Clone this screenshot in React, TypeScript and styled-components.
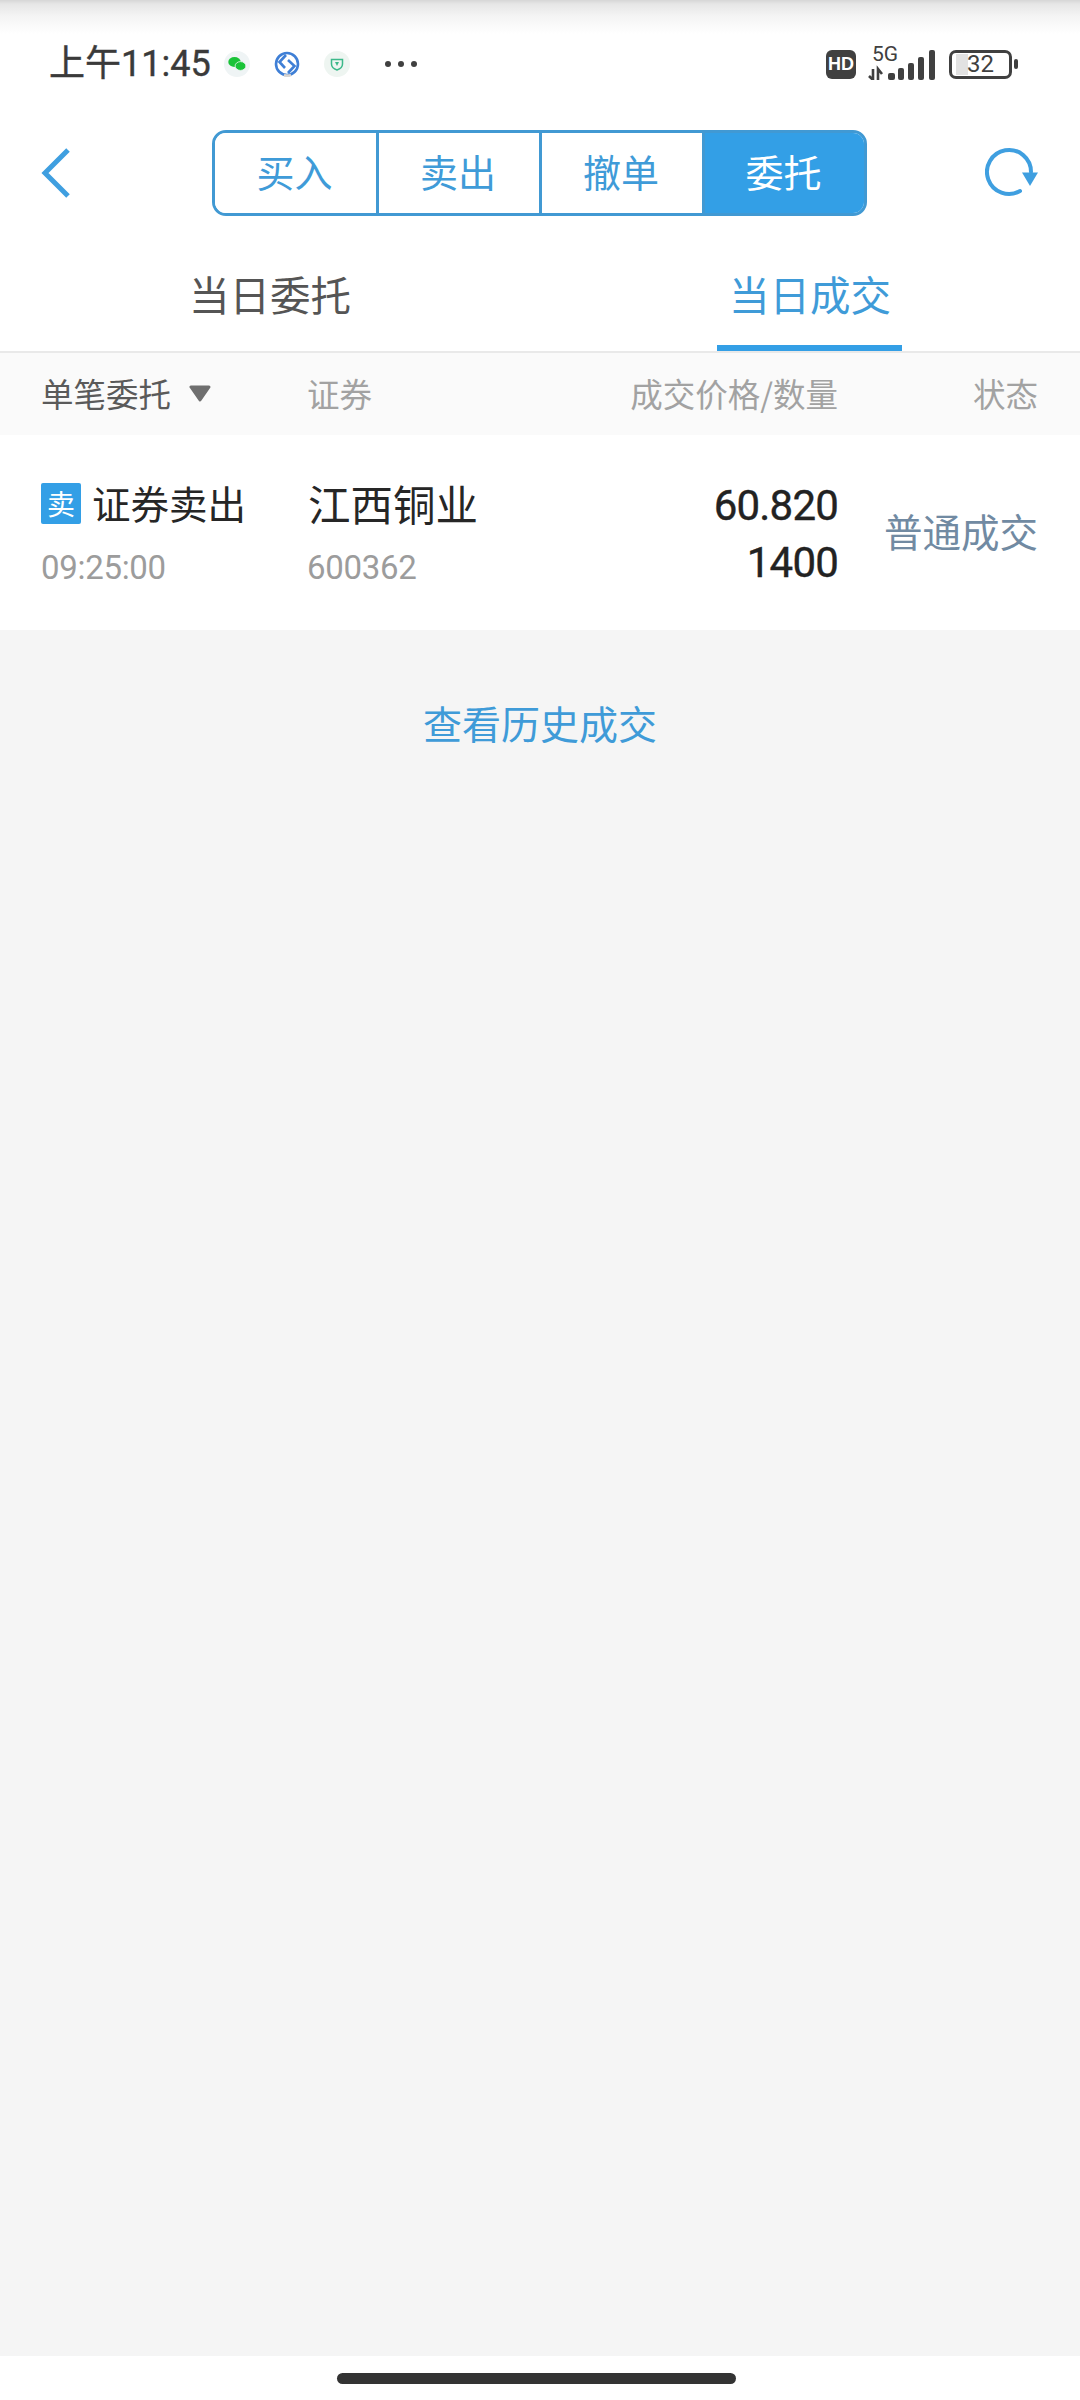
import React from "react";
import styled, { createGlobalStyle } from "styled-components";

const CJK = `"Noto Sans CJK SC", "Noto Sans", sans-serif`;
const DIGITS = `Roboto, "Noto Sans CJK SC", sans-serif`;
const BLUE = "#339fe6";

const GlobalStyle = createGlobalStyle`
    html, body {
        margin: 0;
        padding: 0;
        background: #fff;
    }
    * {
        box-sizing: border-box;
    }
`;

const Page = styled.div`
    width: 1080px;
    height: 2400px;
    display: flex;
    flex-direction: column;
    background: #fff;
    font-family: ${CJK};
    overflow: hidden;
`;

const StatusBar = styled.div`
    height: 130px;
    padding: 43px 62px 0 49px;
    display: flex;
    align-items: flex-start;
    justify-content: space-between;
    background: linear-gradient(#d6d6d6 0, #e6e6e6 4px, #f4f4f4 16px, #fff 34px);
`;

const StatusGroup = styled.div`
    display: flex;
    align-items: center;
    height: 42px;
`;

const Clock = styled.span`
    width: 161px;
    flex: none;
    white-space: nowrap;
    font-family: ${DIGITS};
    font-size: 36px;
    line-height: 42px;
    color: #3a3a3a;
    -webkit-text-stroke: 0.4px #3a3a3a;
`;

const NotifyIcon = styled.svg`
    width: 26px;
    height: 26px;
    margin-left: 24px;
    flex: none;
    &:first-of-type {
        margin-left: 14px;
    }
`;

const MoreDots = styled.svg`
    width: 34px;
    height: 8px;
    margin-left: 34px;
`;

const HdBadge = styled.span`
    width: 30px;
    height: 29px;
    border-radius: 6px;
    background: #404040;
    color: #fff;
    font: 900 18px/29px "Liberation Sans", sans-serif;
    text-align: center;
`;

const SignalBox = styled.div`
    position: relative;
    width: 68px;
    height: 32px;
    margin-left: 12px;
`;

const FiveG = styled.span`
    position: absolute;
    left: 4px;
    top: -4px;
    font: 400 21px/20px ${DIGITS};
    color: #404040;
`;

const Battery = styled.div`
    width: 63px;
    height: 29px;
    margin-left: 13px;
    padding: 1px 4px;
    border: 3px solid #404040;
    border-radius: 7px;
    background: linear-gradient(90deg, #e2e2e2 0 12px, transparent 12px) no-repeat content-box;
    color: #404040;
    font: 400 24px/21px ${DIGITS};
    text-align: center;
`;

const BatteryCap = styled.span`
    width: 4px;
    height: 10px;
    margin-left: 2px;
    border-radius: 2px;
    background: #404040;
`;

const NavBar = styled.div`
    height: 85px;
    display: grid;
    grid-template-columns: 212px 655px 1fr;
    align-items: center;
`;

const BackButton = styled.svg`
    width: 32px;
    height: 52px;
    margin-left: 40px;
`;

const RefreshButton = styled.svg`
    width: 56px;
    height: 56px;
    margin-left: 118px;
`;

const Segment = styled.div`
    height: 86px;
    display: grid;
    grid-template-columns: 161px 163px 163px 1fr;
    border: 3px solid #4199d3;
    border-radius: 14px;
    overflow: hidden;
`;

const SegmentItem = styled.div<{ $active?: boolean }>`
    display: flex;
    align-items: center;
    justify-content: center;
    padding: 0 2px 5px 0;
    font-size: 38px;
    color: ${(p) => (p.$active ? "#fff" : "#3f9bd8")};
    background: ${(p) => (p.$active ? BLUE : "#fff")};
    & + & {
        border-left: 3px solid #4199d3;
    }
`;

const Tabs = styled.div`
    height: 138px;
    padding-top: 51px;
    display: grid;
    grid-template-columns: 1fr 1fr;
    border-bottom: 2px solid #e9e9e9;
`;

const Tab = styled.div<{ $active?: boolean }>`
    position: relative;
    display: flex;
    justify-content: center;
    font-size: 40.5px;
    line-height: 56px;
    color: ${(p) => (p.$active ? "#3f9bd8" : "#555")};
    &::after {
        content: "";
        display: ${(p) => (p.$active ? "block" : "none")};
        position: absolute;
        left: 177px;
        width: 185px;
        bottom: 0;
        height: 6px;
        background: ${BLUE};
    }
`;

const TableRow = styled.div`
    display: grid;
    grid-template-columns: 266px 1fr 1fr 200px;
    padding: 0 42px 0 41px;
`;

const HeaderRow = styled(TableRow)`
    height: 82px;
    padding-bottom: 2px;
    align-items: center;
    background: #fafafa;
`;

const HeaderCell = styled.div<{ $right?: boolean; $dark?: boolean }>`
    display: flex;
    align-items: center;
    justify-content: ${(p) => (p.$right ? "flex-end" : "flex-start")};
    font-size: 32.5px;
    line-height: 44px;
    color: ${(p) => (p.$dark ? "#5a5a5a" : "#a2a2a2")};
`;

const SortArrow = styled.svg`
    width: 24px;
    height: 17px;
    margin-left: 17px;
`;

const TradeRow = styled(TableRow)`
    height: 195px;
    align-items: center;
    background: #fff;
`;

const Stack = styled.div`
    display: flex;
    flex-direction: column;
`;

const TradeTitle = styled.div`
    display: flex;
    align-items: center;
    height: 44px;
    margin-top: 2px;
    font-size: 38.5px;
    line-height: 44px;
    color: #262626;
`;

const SideBadge = styled.span`
    width: 40px;
    height: 41px;
    margin-top: 3px;
    margin-right: 11px;
    border-radius: 2px;
    background: ${BLUE};
    color: #fff;
    font-size: 28px;
    line-height: 40px;
    text-align: center;
`;

const SubText = styled.div`
    margin-top: 24px;
    font-family: ${DIGITS};
    font-size: 33px;
    line-height: 40px;
    letter-spacing: -0.3px;
    color: #9c9c9c;
`;

const StockName = styled.div`
    height: 44px;
    margin: 3px 0 -1px 1px;
    font-size: 42.5px;
    line-height: 44px;
    color: #262626;
`;

const Quantities = styled.div`
    grid-column: 3;
    padding-top: 3px;
    display: flex;
    flex-direction: column;
    align-items: flex-end;
    font-family: ${DIGITS};
    font-size: 42px;
    line-height: 57px;
    letter-spacing: -0.8px;
    color: #222;
    -webkit-text-stroke: 0.4px #222;
`;

const StateText = styled.div`
    padding-bottom: 6px;
    text-align: right;
    font-size: 38.5px;
    color: #718aa2;
`;

const Body = styled.div`
    flex: 1;
    background: #f5f5f5;
    text-align: center;
`;

const HistoryLink = styled.a`
    display: block;
    margin-top: 64px;
    font-size: 39px;
    line-height: 56px;
    color: #3f9bd8;
`;

const HomeArea = styled.div`
    height: 44px;
    display: flex;
    justify-content: center;
    padding-top: 17px;
    background: #fff;
`;

const HomePill = styled.div`
    width: 399px;
    height: 11px;
    margin-left: -7px;
    border-radius: 6px;
    background: #333;
`;

export default function App() {
    return (
        <>
            <GlobalStyle />
            <Page>
                <StatusBar>
                    <StatusGroup>
                        <Clock>上午11:45</Clock>
                        <NotifyIcon viewBox="0 0 26 26">
                            <circle cx="13" cy="13" r="13" fill="#eff4f5" />
                            <ellipse cx="10.5" cy="11" rx="6.2" ry="5" fill="#19c337" />
                            <ellipse cx="16.5" cy="15" rx="5.4" ry="4.4" fill="#19c337" stroke="#eff4f5" strokeWidth="0.8" />
                        </NotifyIcon>
                        <NotifyIcon viewBox="0 0 26 26">
                            <circle cx="13" cy="13" r="11" fill="none" stroke="#3f7fd6" strokeWidth="2.6" />
                            <path d="M12 4 L5.5 11 L11 17 M14 9 L20.5 15 L14 22" fill="none" stroke="#3f7fd6" strokeWidth="2.6" />
                            <path d="M10 24 A11 11 0 0 0 17 24" fill="none" stroke="#d8d4d0" strokeWidth="2.6" />
                        </NotifyIcon>
                        <NotifyIcon viewBox="0 0 26 26">
                            <circle cx="13" cy="13" r="13" fill="#eef5f1" />
                            <path d="M7.5 8.5 H18.5 V13 C18.5 16 16 18 13 19 C10 18 7.5 16 7.5 13 Z" fill="none" stroke="#3cb98a" strokeWidth="1.5" />
                            <path d="M11 11 H15 L13 15 Z" fill="#3cb98a" />
                        </NotifyIcon>
                        <MoreDots viewBox="0 0 34 8">
                            <circle cx="4" cy="4" r="3" fill="#404040" />
                            <circle cx="17" cy="4" r="3" fill="#404040" />
                            <circle cx="30" cy="4" r="3" fill="#404040" />
                        </MoreDots>
                    </StatusGroup>
                    <StatusGroup>
                        <HdBadge>HD</HdBadge>
                        <SignalBox>
                            <FiveG>5G</FiveG>
                            <svg width="68" height="32" viewBox="0 0 68 32">
                                <path d="M5 21 V32 M1 28 L5 32 M10 32 V21 L14 26" fill="none" stroke="#404040" strokeWidth="2.6" />
                                <rect x="20" y="25" width="7" height="7" rx="2" fill="#404040" />
                                <rect x="30" y="20" width="6" height="12" rx="2" fill="#404040" />
                                <rect x="40" y="15" width="6" height="17" rx="2" fill="#404040" />
                                <rect x="50" y="9" width="6" height="23" rx="2" fill="#404040" />
                                <rect x="61" y="2" width="6" height="30" rx="2" fill="#404040" />
                            </svg>
                        </SignalBox>
                        <Battery>32</Battery>
                        <BatteryCap />
                    </StatusGroup>
                </StatusBar>

                <NavBar>
                    <BackButton viewBox="0 0 32 52">
                        <path d="M28 3 L5 26 L28 49" fill="none" stroke="#3f9fe0" strokeWidth="5" />
                    </BackButton>
                    <Segment>
                        <SegmentItem>买入</SegmentItem>
                        <SegmentItem>卖出</SegmentItem>
                        <SegmentItem>撤单</SegmentItem>
                        <SegmentItem $active>委托</SegmentItem>
                    </Segment>
                    <RefreshButton viewBox="0 0 56 56">
                        <path d="M46 27 A22 22 0 1 0 35 46" fill="none" stroke="#3f9fe0" strokeWidth="4" strokeLinecap="round" />
                        <path d="M37 27.5 H53 L45 41 Z" fill="#3f9fe0" />
                    </RefreshButton>
                </NavBar>

                <Tabs>
                    <Tab>当日委托</Tab>
                    <Tab $active>当日成交</Tab>
                </Tabs>

                <HeaderRow>
                    <HeaderCell $dark>
                        单笔委托
                        <SortArrow viewBox="0 0 24 17">
                            <path d="M3 2 H21 L12 15 Z" fill="#6f6f6f" stroke="#6f6f6f" strokeWidth="3" strokeLinejoin="round" />
                        </SortArrow>
                    </HeaderCell>
                    <HeaderCell>证券</HeaderCell>
                    <HeaderCell $right>成交价格/数量</HeaderCell>
                    <HeaderCell $right>状态</HeaderCell>
                </HeaderRow>

                <TradeRow>
                    <Stack>
                        <TradeTitle>
                            <SideBadge>卖</SideBadge>
                            证券卖出
                        </TradeTitle>
                        <SubText>09:25:00</SubText>
                    </Stack>
                    <Stack>
                        <StockName>江西铜业</StockName>
                        <SubText>600362</SubText>
                    </Stack>
                    <Quantities>
                        <span>60.820</span>
                        <span>1400</span>
                    </Quantities>
                    <StateText>普通成交</StateText>
                </TradeRow>

                <Body>
                    <HistoryLink>查看历史成交</HistoryLink>
                </Body>

                <HomeArea>
                    <HomePill />
                </HomeArea>
            </Page>
        </>
    );
}
